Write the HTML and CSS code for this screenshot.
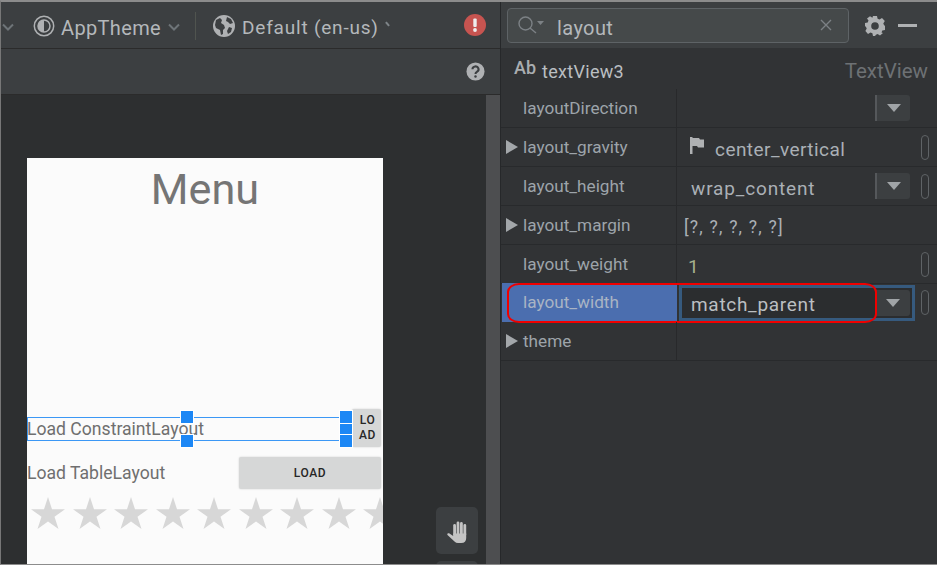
FILE: index.html
```html
<!DOCTYPE html>
<html lang="en">
<head>
<meta charset="utf-8">
<title>Layout editor</title>
<link rel="stylesheet" href="styles.css">
</head>
<body>
<div class="app">
  <section class="editor">
    <div class="toolbar">
      <svg class="chev chev-cut" viewBox="0 0 12 8"><path d="M1 1.5l5 5 5-5"/></svg>
      <svg class="ico theme-ico" viewBox="0 0 22 22"><circle cx="11" cy="11" r="9.7" class="ring"/><circle cx="11" cy="11" r="6" class="ring2"/><path d="M11 5a6 6 0 0 0 0 12z" class="fill"/></svg>
      <span class="tool-text">AppTheme</span>
      <svg class="chev" viewBox="0 0 12 8"><path d="M1 1.5l5 5 5-5"/></svg>
      <span class="tool-sep"></span>
      <svg class="ico globe-ico" viewBox="0 0 22 22"><circle cx="11" cy="11" r="11" class="fill"/><path d="M3 5l4-2 2 2-1 3 3 2 1 3-2 2v4l-2 1-1-5-4-2-1-3z M14 2l4 2 2 4-3 1-2-2-2-1z M16 12l3 1-1 4-3 2-1-3z" class="cut"/></svg>
      <span class="tool-text locale">Default (en-us)</span>
      <span class="tick"></span>
      <svg class="ico alert-ico" viewBox="0 0 22 22"><circle cx="11" cy="11" r="11" class="red"/><rect x="9.3" y="4.5" width="3.4" height="8.5" rx="1" class="pale"/><circle cx="11" cy="16" r="1.9" class="pale"/></svg>
    </div>
    <div class="toolbar-two">
      <svg class="ico help-ico" viewBox="0 0 20 20"><circle cx="10" cy="10" r="9.5" class="grey"/><path d="M6.8 7.6a3.2 3 0 1 1 4.7 2.7c-1 .6-1.5 1-1.5 2.2" class="q"/><circle cx="10" cy="15.3" r="1.3" class="dot"/></svg>
    </div>
    <div class="canvas-wrap">
      <div class="canvas">
        <div class="screen">
          <h1 class="menu-title">Menu</h1>
          <div class="load-row first">
            <div class="selected-text">
              <span class="row-label">Load ConstraintLayout</span>
              <i class="handle h-top"></i>
              <i class="handle h-bottom"></i>
              <i class="handle h-r1"></i>
              <i class="handle h-r2"></i>
              <i class="handle h-r3"></i>
            </div>
            <button class="load narrow">LO<br>AD</button>
          </div>
          <div class="load-row second">
            <span class="row-label">Load TableLayout</span>
            <button class="load wide">LOAD</button>
          </div>
          <div class="stars">
            <svg viewBox="0 0 34 32"><polygon points="17,0 21,12.2 34,12.2 23.5,19.8 27.5,32 17,24.5 6.5,32 10.5,19.8 0,12.2 13,12.2"/></svg>
            <svg viewBox="0 0 34 32"><polygon points="17,0 21,12.2 34,12.2 23.5,19.8 27.5,32 17,24.5 6.5,32 10.5,19.8 0,12.2 13,12.2"/></svg>
            <svg viewBox="0 0 34 32"><polygon points="17,0 21,12.2 34,12.2 23.5,19.8 27.5,32 17,24.5 6.5,32 10.5,19.8 0,12.2 13,12.2"/></svg>
            <svg viewBox="0 0 34 32"><polygon points="17,0 21,12.2 34,12.2 23.5,19.8 27.5,32 17,24.5 6.5,32 10.5,19.8 0,12.2 13,12.2"/></svg>
            <svg viewBox="0 0 34 32"><polygon points="17,0 21,12.2 34,12.2 23.5,19.8 27.5,32 17,24.5 6.5,32 10.5,19.8 0,12.2 13,12.2"/></svg>
            <svg viewBox="0 0 34 32"><polygon points="17,0 21,12.2 34,12.2 23.5,19.8 27.5,32 17,24.5 6.5,32 10.5,19.8 0,12.2 13,12.2"/></svg>
            <svg viewBox="0 0 34 32"><polygon points="17,0 21,12.2 34,12.2 23.5,19.8 27.5,32 17,24.5 6.5,32 10.5,19.8 0,12.2 13,12.2"/></svg>
            <svg viewBox="0 0 34 32"><polygon points="17,0 21,12.2 34,12.2 23.5,19.8 27.5,32 17,24.5 6.5,32 10.5,19.8 0,12.2 13,12.2"/></svg>
            <svg viewBox="0 0 34 32"><polygon points="17,0 21,12.2 34,12.2 23.5,19.8 27.5,32 17,24.5 6.5,32 10.5,19.8 0,12.2 13,12.2"/></svg>
          </div>
        </div>
        <div class="float-btn hand">
          <svg viewBox="0 0 20 22"><rect x="6.200" y="3" width="2.800" height="12" rx="1.400"/><rect x="9.600" y=".5" width="2.800" height="14" rx="1.400"/><rect x="13" y="1" width="2.800" height="14" rx="1.400"/><rect x="16.400" y="3" width="2.800" height="12" rx="1.400"/><path d="M6.200 12.500H19.200V17q0 5-5 5H11q-2 0-3.500-1.500L.5 14c-.8-1 .5-2.500 2-1.500L6.200 15z"/></svg>
        </div>
        <div class="float-btn next"></div>
      </div>
      <div class="scrollbar"></div>
    </div>
  </section>
  <aside class="attrs">
    <div class="search-bar">
      <div class="search">
        <svg class="search-ico" viewBox="0 0 26 18"><circle cx="7.500" cy="7.500" r="6.500"/><path d="M12 12l6 5"/><polygon points="19,5 26,5 22.500,9"/></svg>
        <span class="search-text">layout</span>
        <svg class="clear" viewBox="0 0 12 12"><path d="M1 1l10 10M11 1L1 11"/></svg>
      </div>
      <svg class="gear" viewBox="0 0 20 20"><path fill-rule="evenodd" d="M8 0h4l.6 2.800 1.900.8L17 2l2.800 3-1.500 2.400.7 1.600 1 .9v4l-2.700.6-.8 1.900L18 17l-3 2.400-2.400-1.300-1.600.7-1 1.200H8l-.6-2.700-1.900-.8L3 18 .4 15l1.300-2.400L1 11 0 10V7l2.700-.6.800-1.900L2 2.500 5 .3l2.400 1.500z M10 6.200a3.800 3.800 0 1 0 0 7.600 3.800 3.800 0 0 0 0-7.600z"/></svg>
      <span class="minimize"></span>
    </div>
    <div class="attr-head">
      <span class="ab">Ab</span>
      <span class="view-id">textView3</span>
      <span class="view-type">TextView</span>
    </div>
    <div class="attr-row">
      <div class="name">layoutDirection</div>
      <div class="value"><span class="combo"><i></i></span></div>
    </div>
    <div class="attr-row">
      <div class="name"><i class="arrow"></i>layout_gravity</div>
      <div class="value">
        <svg class="flag" viewBox="0 0 14 17"><path d="M0 0h2.500v17H0z M2.500 1H9l1 1.500h4v8H8l-1-1.500H2.500z"/></svg>
        <span class="text big gravity">center_vertical</span>
        <span class="pill"></span>
      </div>
    </div>
    <div class="attr-row">
      <div class="name">layout_height</div>
      <div class="value"><span class="text big wrap">wrap_content</span><span class="combo"><i></i></span><span class="pill"></span></div>
    </div>
    <div class="attr-row">
      <div class="name"><i class="arrow"></i>layout_margin</div>
      <div class="value"><span class="text small">[?, ?, ?, ?, ?]</span></div>
    </div>
    <div class="attr-row">
      <div class="name">layout_weight</div>
      <div class="value"><span class="text big weight">1</span><span class="pill"></span></div>
    </div>
    <div class="attr-row active">
      <div class="name">layout_width</div>
      <div class="value">
        <div class="edit"><span class="text big match">match_parent</span><span class="combo"><i></i></span></div>
        <span class="pill"></span>
      </div>
      <div class="annotation"></div>
    </div>
    <div class="attr-row">
      <div class="name"><i class="arrow"></i>theme</div>
      <div class="value"></div>
    </div>
  </aside>
</div>
</body>
</html>
```

FILE: styles.css
```css
* { box-sizing: border-box; }
html, body { margin: 0; height: 100%; overflow: hidden; }
body { background: #313335; font-family: Roboto, "Open Sans", sans-serif; color: #a9b7c6; }

.app {
  width: 937px; height: 565px; display: flex; overflow: hidden;
  border-top: 2px solid #8c8c8c; border-left: 1px solid #777; border-bottom: 1px solid #8c8c8c;
  background: #313335;
}

/* left editor */
.editor { width: 500px; display: flex; flex-direction: column; flex: none; border-right: 1px solid #26282a; }
.toolbar { height: 47px; flex: none; background: #3c3f41; border-bottom: 1px solid #2b2b2b; display: flex; align-items: center; padding-top: 1px; }
.toolbar-two { height: 46px; flex: none; background: #3c3f41; border-bottom: 1px solid #2b2b2b; display: flex; align-items: center; justify-content: flex-end; padding-right: 15px; }
.ico { display: block; flex: none; }
.chev { width: 12px; height: 8px; fill: none; stroke: #6e7478; stroke-width: 2; flex: none; margin-top: 2px; }
.chev-cut { margin-left: 1px; width: 12px; }
.theme-ico { width: 22px; height: 22px; margin-left: 19px; }
.ring { fill: none; stroke: #afb1b3; stroke-width: 1.500; }
.ring2 { fill: none; stroke: #afb1b3; stroke-width: 1.500; }
.fill { fill: #afb1b3; }
.tool-text { font-size: 20px; color: #b4b8bb; letter-spacing: .35px; margin-left: 6px; margin-right: 7px; padding-top: 4px; }
.tool-sep { width: 1px; height: 28px; background: #50544f; margin-left: 15px; margin-right: 17px; }
.globe-ico { width: 22px; height: 22px; }
.cut { fill: #3c3f41; }
.locale { margin-left: 7px; font-size: 19px; letter-spacing: .8px; margin-right: 6px; }
.tick { width: 5px; height: 2px; background: #7e8488; transform: rotate(50deg); margin-top: -3px; }
.alert-ico { width: 22px; height: 22px; margin-left: 74px; margin-top: -1px; }
.red { fill: #c75450; }
.pale { fill: #eee; }
.help-ico { width: 19px; height: 19px; margin-top: -1px; }
.grey { fill: #afb1b3; }
.q { fill: none; stroke: #3c3f41; stroke-width: 2.200; }
.dot { fill: #3c3f41; }

.canvas-wrap { flex: 1; display: flex; min-height: 0; background: #2d2f30; }
.canvas { flex: 1; position: relative; padding: 63px 0 0 26px; overflow: hidden; }
.scrollbar { width: 14px; background: #4d4e50; flex: none; }

.screen { width: 356px; height: 420px; background: #fbfbfb; display: flex; flex-direction: column; overflow: hidden; }
.menu-title { margin: 0; height: 251px; font-size: 43.200px; font-weight: 400; line-height: 64px; text-align: center; color: #757575; flex: none; }
.load-row { display: flex; align-items: center; flex: none; }
.load-row.first { height: 38px; }
.load-row.second { height: 32px; margin-top: 10px; justify-content: space-between; padding-right: 2px; }
.row-label { font-size: 17.600px; color: #6f6f6f; }
.selected-text { position: relative; width: 325px; height: 24px; border: 1px solid #3b97f5; display: flex; align-items: center; margin-top: 2px; }
.selected-text .row-label { margin-left: -1px; }
.handle { position: absolute; width: 12px; height: 12px; background: #1c87f5; outline: 1px solid #fff; }
.h-top { left: 153px; top: -7px; }
.h-bottom { left: 153px; top: 17px; }
.h-r1 { right: -1px; top: -7px; }
.h-r2 { right: -1px; top: 6px; height: 10px; }
.h-r3 { right: -1px; top: 17px; }
.load { border: 0; background: #d6d7d7; color: #262626; font: 500 12px/15px Roboto, sans-serif; padding: 0; letter-spacing: .6px; border-radius: 2px; box-shadow: 0 0 2px rgba(0,0,0,.18); }
.narrow { width: 29px; height: 38px; padding-left: 2px; }
.wide { width: 142px; height: 32px; padding-top: 1px; }
.stars { display: flex; gap: 7.500px; margin-top: 8px; padding-left: 4px; flex: none; width: 356px; }
.stars svg { width: 34px; height: 32px; fill: #d7d7d7; flex: none; }

.float-btn { position: absolute; left: 435px; width: 42px; background: #3c3f41; border-radius: 5px; display: flex; align-items: center; justify-content: center; }
.hand { top: 412px; height: 47px; }
.hand svg { width: 20px; height: 22px; fill: #c4c4c4; margin-top: 2px; }
.next { top: 466px; height: 20px; }

/* attributes */
.attrs { flex: 1; min-width: 0; display: flex; flex-direction: column; }
.search-bar { height: 46px; flex: none; background: #3c3f41; display: flex; align-items: center; padding-left: 6px; }
.search { width: 342px; height: 35px; border: 1.500px solid #5e6366; border-radius: 4px; background: #45494a; display: flex; align-items: center; padding: 0 16px 0 10px; }
.search-ico { width: 26px; height: 18px; fill: none; stroke: #7c8185; stroke-width: 1.400; flex: none; }
.search-ico polygon { fill: #7c8185; stroke: none; }
.search-text { font-size: 20px; color: #b4b8bb; margin-left: 13px; flex: 1; padding-top: 5px; letter-spacing: .4px; }
.clear { width: 12px; height: 12px; stroke: #7c8185; stroke-width: 1.400; fill: none; flex: none; }
.gear { width: 20px; height: 20px; fill: #afb1b3; margin-left: 16px; flex: none; margin-top: 1px; }
.minimize { width: 19px; height: 3px; background: #afb1b3; margin-left: 13px; flex: none; }

.attr-head { height: 41px; flex: none; display: flex; align-items: center; padding: 0 9px 0 13px; }
.ab { font-size: 18px; font-weight: 500; color: #a9adb0; margin-top: -2px; width: 29px; }
.view-id { font-size: 18px; color: #bbbfc2; flex: 1; letter-spacing: .3px; padding-top: 5px; margin-left: -1px; }
.view-type { font-size: 20.500px; color: #6d7174; padding-top: 5px; }

.attr-row { height: 39px; flex: none; position: relative; display: flex; border-bottom: 1px solid #282a2c; color: #9da4aa; }
.name { width: 176px; flex: none; padding-left: 22px; display: flex; align-items: center; font-size: 17.200px; position: relative; border-right: 1px solid #28292b; }
.arrow { position: absolute; left: 5px; top: 12px; width: 0; height: 0; border-left: 12px solid #a3a7aa; border-top: 7px solid transparent; border-bottom: 7px solid transparent; }
.value { flex: 1; display: flex; align-items: center; padding-left: 13px; position: relative; padding-right: 7px; }
.text { color: #aab0b6; }
.big { font-size: 19px; letter-spacing: .45px; padding-top: 4px; }
.small { font-size: 17.500px; letter-spacing: 1.200px; margin-left: -6px; padding-top: 3px; }
.gravity { margin-left: 11px; }
.wrap { letter-spacing: .85px; margin-left: 1px; }
.match { letter-spacing: .7px; padding-top: 2px; }
.weight { color: #a5b08e; margin-left: -2px; }
.flag { width: 14px; height: 17px; fill: #afb1b3; margin-top: -4px; flex: none; }
.combo { position: absolute; right: 27px; top: 6px; width: 35px; height: 26px; background: #3c3f41; border-left: 2px solid #55585b; border-radius: 0 3px 3px 0; display: flex; align-items: center; justify-content: center; }
.combo i { width: 0; height: 0; border-top: 8px solid #a0a4a7; border-left: 7px solid transparent; border-right: 7px solid transparent; margin-left: 1px; }
.pill { position: absolute; right: 8px; top: 0; bottom: 0; margin: auto; width: 8px; height: 25px; border: 1.500px solid #5f6366; border-radius: 4px; }

.active { border-bottom: 0; height: 39px; margin-top: -1px; }
.active .name { background: #4b6eaf; border-right: 0; color: #a9b4c4; padding-left: 21px; margin-left: 1px; width: 175px; padding-bottom: 1px; }
.edit { position: absolute; left: 2px; top: 2px; width: 236px; height: 36px; background: #2b2d2f; border: 3px solid #365a7e; display: flex; align-items: center; padding-left: 9px; }
.edit .combo { right: 2px; top: 2px; border-left: 0; width: 35px; height: 26px; }
.edit .text { color: #bbbfc2; }
.annotation { position: absolute; left: 6px; top: 0; width: 370px; height: 40px; border: 2px solid #f00000; border-radius: 12px / 9px; pointer-events: none; }
```
